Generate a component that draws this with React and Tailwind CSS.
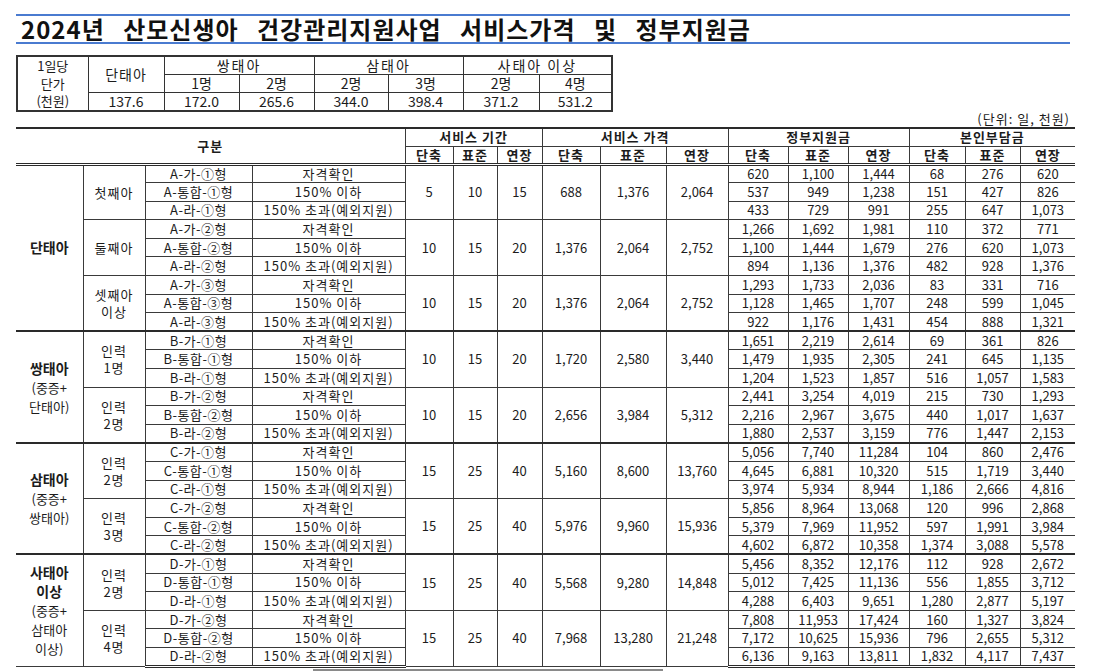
import React from "react";

const criteria = ["자격확인", "150% 이하", "150% 초과(예외지원)"];
const codeMid = ["가", "통합", "라"];

const groups = [
  {
    label: (
      <span className="font-bold text-[14px]">단태아</span>
    ),
    subs: [
      {
        label: ["첫째아"],
        code: "A",
        num: "①",
        period: ["5", "10", "15"],
        price: ["688", "1,376", "2,064"],
        rows: [
          ["620", "1,100", "1,444", "68", "276", "620"],
          ["537", "949", "1,238", "151", "427", "826"],
          ["433", "729", "991", "255", "647", "1,073"],
        ],
      },
      {
        label: ["둘째아"],
        code: "A",
        num: "②",
        period: ["10", "15", "20"],
        price: ["1,376", "2,064", "2,752"],
        rows: [
          ["1,266", "1,692", "1,981", "110", "372", "771"],
          ["1,100", "1,444", "1,679", "276", "620", "1,073"],
          ["894", "1,136", "1,376", "482", "928", "1,376"],
        ],
      },
      {
        label: ["셋째아", "이상"],
        code: "A",
        num: "③",
        period: ["10", "15", "20"],
        price: ["1,376", "2,064", "2,752"],
        rows: [
          ["1,293", "1,733", "2,036", "83", "331", "716"],
          ["1,128", "1,465", "1,707", "248", "599", "1,045"],
          ["922", "1,176", "1,431", "454", "888", "1,321"],
        ],
      },
    ],
  },
  {
    label: (
      <>
        <span className="block font-bold text-[14px]">쌍태아</span>
        <span className="block">(중증+</span>
        <span className="block">단태아)</span>
      </>
    ),
    subs: [
      {
        label: ["인력", "1명"],
        code: "B",
        num: "①",
        period: ["10", "15", "20"],
        price: ["1,720", "2,580", "3,440"],
        rows: [
          ["1,651", "2,219", "2,614", "69", "361", "826"],
          ["1,479", "1,935", "2,305", "241", "645", "1,135"],
          ["1,204", "1,523", "1,857", "516", "1,057", "1,583"],
        ],
      },
      {
        label: ["인력", "2명"],
        code: "B",
        num: "②",
        period: ["10", "15", "20"],
        price: ["2,656", "3,984", "5,312"],
        rows: [
          ["2,441", "3,254", "4,019", "215", "730", "1,293"],
          ["2,216", "2,967", "3,675", "440", "1,017", "1,637"],
          ["1,880", "2,537", "3,159", "776", "1,447", "2,153"],
        ],
      },
    ],
  },
  {
    label: (
      <>
        <span className="block font-bold text-[14px]">삼태아</span>
        <span className="block">(중증+</span>
        <span className="block">쌍태아)</span>
      </>
    ),
    subs: [
      {
        label: ["인력", "2명"],
        code: "C",
        num: "①",
        period: ["15", "25", "40"],
        price: ["5,160", "8,600", "13,760"],
        rows: [
          ["5,056", "7,740", "11,284", "104", "860", "2,476"],
          ["4,645", "6,881", "10,320", "515", "1,719", "3,440"],
          ["3,974", "5,934", "8,944", "1,186", "2,666", "4,816"],
        ],
      },
      {
        label: ["인력", "3명"],
        code: "C",
        num: "②",
        period: ["15", "25", "40"],
        price: ["5,976", "9,960", "15,936"],
        rows: [
          ["5,856", "8,964", "13,068", "120", "996", "2,868"],
          ["5,379", "7,969", "11,952", "597", "1,991", "3,984"],
          ["4,602", "6,872", "10,358", "1,374", "3,088", "5,578"],
        ],
      },
    ],
  },
  {
    label: (
      <>
        <span className="block font-bold text-[14px]">사태아</span>
        <span className="block font-bold text-[14px]">이상</span>
        <span className="block">(중증+</span>
        <span className="block">삼태아</span>
        <span className="block">이상)</span>
      </>
    ),
    subs: [
      {
        label: ["인력", "2명"],
        code: "D",
        num: "①",
        period: ["15", "25", "40"],
        price: ["5,568", "9,280", "14,848"],
        rows: [
          ["5,456", "8,352", "12,176", "112", "928", "2,672"],
          ["5,012", "7,425", "11,136", "556", "1,855", "3,712"],
          ["4,288", "6,403", "9,651", "1,280", "2,877", "5,197"],
        ],
      },
      {
        label: ["인력", "4명"],
        code: "D",
        num: "②",
        period: ["15", "25", "40"],
        price: ["7,968", "13,280", "21,248"],
        rows: [
          ["7,808", "11,953", "17,424", "160", "1,327", "3,824"],
          ["7,172", "10,625", "15,936", "796", "2,655", "5,312"],
          ["6,136", "9,163", "13,811", "1,832", "4,117", "7,437"],
        ],
      },
    ],
  },
];

const cell = "border border-[#3a3a3a] p-0 text-center align-middle";
const colWidths = [67, 62, 107, 153, 48, 44, 45, 58, 66, 62, 60, 60, 61, 56, 55, 55];

function BodyRows() {
  const out = [];
  groups.forEach((g, gi) => {
    g.subs.forEach((s, si) => {
      s.rows.forEach((r, ri) => {
        const first = si === 0 && ri === 0;
        const last = gi === groups.length - 1 && si === g.subs.length - 1 && ri === 2;
        const edge = first
          ? "border-t-2 border-t-[#2a2a2a]"
          : ri === 0
          ? "border-t-[#2a2a2a]"
          : "";
        const bottom = last ? "border-b-[3px] border-b-[#2a2a2a] border-double" : "";
        out.push(
          <tr key={`${gi}-${si}-${ri}`} className="h-[18.6px]">
            {first && (
              <td
                rowSpan={g.subs.length * 3}
                className={`${cell} ${edge} ${bottom} border-l-0 leading-[19px]`}
              >
                {g.label}
              </td>
            )}
            {ri === 0 && (
              <td rowSpan={3} className={`${cell} ${edge} ${bottom} leading-[17px] tracking-[1px]`}>
                {s.label.map((l) => (
                  <span key={l} className="block">
                    {l}
                  </span>
                ))}
              </td>
            )}
            <td className={`${cell} ${edge} ${bottom} tracking-[0.5px]`}>
              {s.code}-{codeMid[ri]}-{s.num}형
            </td>
            <td className={`${cell} ${edge} ${bottom} tracking-[1px]`}>{criteria[ri]}</td>
            {ri === 0 &&
              [...s.period, ...s.price].map((v, i) => (
                <td key={i} rowSpan={3} className={`${cell} ${edge} ${bottom}`}>
                  {v}
                </td>
              ))}
            {r.map((v, i) => (
              <td
                key={i}
                className={`${cell} ${edge} ${bottom} ${i === 5 ? "border-r-0" : ""}`}
              >
                {v}
              </td>
            ))}
          </tr>
        );
      });
    });
  });
  return out;
}

function SmallTable() {
  const sc = "border border-[#333] p-0 text-center align-middle";
  return (
    <table className="ml-[16px] mt-[11px] border-collapse table-fixed border-2 border-[#333] w-[595px] text-[14px] leading-[17px]">
      <colgroup>
        {[71, 76, 75, 75, 74, 75, 76, 73].map((w, i) => (
          <col key={i} style={{ width: w }} />
        ))}
      </colgroup>
      <tbody>
        <tr className="h-[18px]">
          <td rowSpan={3} className={`${sc} text-[13px] leading-[17.5px]`}>
            <span className="block">1일당</span>
            <span className="block">단가</span>
            <span className="block">(천원)</span>
          </td>
          <td rowSpan={2} className={`${sc} tracking-[1px]`}>단태아</td>
          <td colSpan={2} className={`${sc} tracking-[2px]`}>쌍태아</td>
          <td colSpan={2} className={`${sc} tracking-[2px]`}>삼태아</td>
          <td colSpan={2} className={`${sc} tracking-[2px]`}>사태아 이상</td>
        </tr>
        <tr className="h-[18px]">
          {["1명", "2명", "2명", "3명", "2명", "4명"].map((v, i) => (
            <td key={i} className={sc}>
              {v}
            </td>
          ))}
        </tr>
        <tr className="h-[18px]">
          {["137.6", "172.0", "265.6", "344.0", "398.4", "371.2", "531.2"].map((v, i) => (
            <td key={i} className={sc}>
              {v}
            </td>
          ))}
        </tr>
      </tbody>
    </table>
  );
}

export default function App() {
  const hc = `${cell} font-bold tracking-[1px]`;
  return (
    <div className="w-[1108px] h-[671px] overflow-hidden bg-white text-[#1c1c1c] font-['Noto_Sans_CJK_KR','Noto_Sans',sans-serif]">
      <div className="mt-[14px] ml-[16px] w-[1054px] h-[30px] border-t-2 border-b-2 border-[#4a7bd0] flex items-center pl-[5px]">
        <h1 className="text-[24px] font-bold leading-none tracking-[1px] [word-spacing:12px] text-[#111]">
          2024년 산모신생아 건강관리지원사업 서비스가격 및 정부지원금
        </h1>
      </div>

      <SmallTable />

      <div className="h-[15px] flex justify-end pr-[38px] text-[13px] leading-[13px] tracking-[1px]">
        (단위: 일, 천원)
      </div>

      <table className="ml-[16px] border-collapse table-fixed w-[1059px] text-[13px] leading-[16px]">
        <colgroup>
          {colWidths.map((w, i) => (
            <col key={i} style={{ width: w }} />
          ))}
        </colgroup>
        <thead>
          <tr className="h-[18px]">
            <th
              colSpan={4}
              rowSpan={2}
              className={`${hc} border-l-0 border-t-2 border-t-[#2a2a2a] border-b-[3px] border-b-[#2a2a2a] border-double`}
            >
              구분
            </th>
            <th colSpan={3} className={`${hc} border-t-2 border-t-[#2a2a2a] tracking-[1.5px]`}>
              서비스 기간
            </th>
            <th colSpan={3} className={`${hc} border-t-2 border-t-[#2a2a2a] tracking-[1.5px]`}>
              서비스 가격
            </th>
            <th colSpan={3} className={`${hc} border-t-2 border-t-[#2a2a2a]`}>
              정부지원금
            </th>
            <th colSpan={3} className={`${hc} border-t-2 border-t-[#2a2a2a] border-r-0`}>
              본인부담금
            </th>
          </tr>
          <tr className="h-[18px]">
            {[0, 1, 2, 3].flatMap((g) =>
              ["단축", "표준", "연장"].map((t, i) => (
                <th
                  key={`${g}-${i}`}
                  className={`${hc} border-b-[3px] border-b-[#2a2a2a] border-double ${
                    g === 3 && i === 2 ? "border-r-0" : ""
                  }`}
                >
                  {t}
                </th>
              ))
            )}
          </tr>
        </thead>
        <tbody>
          <BodyRows />
        </tbody>
      </table>

      <div className="ml-[313px] mt-[1px] w-[350px] h-[3px] bg-[#8a8a8a]" />
    </div>
  );
}
